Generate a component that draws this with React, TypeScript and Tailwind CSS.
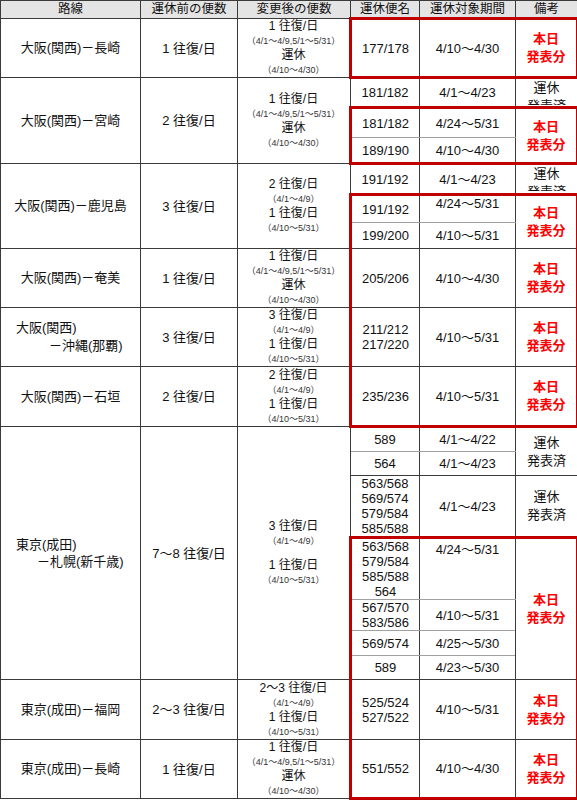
import React from "react";

// base cell styles
const td = "border border-[#3a3a3a] p-0 text-center align-middle";
const subB = "border-b-[#a0a0a0]";
const subT = "border-t-[#a0a0a0]";
const rT = "border-t-[3px] border-t-[#c00000]";
const rB = "border-b-[3px] border-b-[#c00000]";
const rL = "border-l-[3px] border-l-[#c00000]";
const rR = "border-r-[3px] border-r-[#c00000]";

const big = "text-[13px] leading-[15px]";
const head = "text-[12.5px] leading-[15px]";
const num = "text-[13px] leading-[15px]";
const route = "text-[13px]";

function Today() {
  return (
    <div className="text-[13px] leading-[18px] font-bold text-[#ff0000]">
      本日
      <br />
      発表分
    </div>
  );
}

function Done({ clip }: { clip?: boolean }) {
  return (
    <div
      className={`text-[13px] leading-[18px] ${clip ? "h-[26px] overflow-hidden" : ""}`}
    >
      運休
      <br />
      発表済
    </div>
  );
}

function Sched({ v, gap }: { v: readonly string[]; gap?: boolean }) {
  return (
    <div className="flex flex-col items-center">
      <span className="text-[12px] leading-[15px]">{v[0]}</span>
      <span className="text-[9px] leading-[14px] text-[#333]">{v[1]}</span>
      <span className={`text-[12px] leading-[15px] ${gap ? "mt-[10px]" : ""}`}>{v[2]}</span>
      <span className="text-[9px] leading-[14px] text-[#333]">{v[3]}</span>
    </div>
  );
}

const cut = ["1 往復/日", "（4/1～4/9,5/1～5/31）", "運休", "（4/10～4/30）"] as const;
const two = (x: string) => [x, "（4/1～4/9）", "1 往復/日", "（4/10～5/31）"] as const;

export default function App() {
  return (
    <div className="w-[577px] bg-white text-[#111] font-['Liberation_Sans','Noto_Sans_CJK_JP',sans-serif]">
      <table className="w-[577px] table-fixed border-collapse">
        <colgroup>
          <col className="w-[140px]" />
          <col className="w-[97px]" />
          <col className="w-[113px]" />
          <col className="w-[69px]" />
          <col className="w-[96px]" />
          <col className="w-[62px]" />
        </colgroup>
        <thead>
          <tr className="h-[18px] bg-[#e4e4e4]">
            {["路線", "運休前の便数", "変更後の便数", "運休便名", "運休対象期間", "備考"].map((h) => (
              <th key={h} className={`${td} font-normal ${head}`}>
                {h}
              </th>
            ))}
          </tr>
        </thead>
        <tbody>
          {/* 大阪－長崎 */}
          <tr className="h-[59px]">
            <td className={`${td} ${route}`}>大阪(関西)－長崎</td>
            <td className={`${td} ${big}`}>1 往復/日</td>
            <td className={td}><Sched v={cut} /></td>
            <td className={`${td} ${num} ${rT} ${rL} ${rB}`}>177/178</td>
            <td className={`${td} ${num} ${rT} ${rB}`}>4/10～4/30</td>
            <td className={`${td} ${rT} ${rR} ${rB}`}><Today /></td>
          </tr>

          {/* 大阪－宮崎 */}
          <tr className="h-[30px]">
            <td rowSpan={3} className={`${td} ${route}`}>大阪(関西)－宮崎</td>
            <td rowSpan={3} className={`${td} ${big}`}>2 往復/日</td>
            <td rowSpan={3} className={td}><Sched v={cut} /></td>
            <td className={`${td} ${num}`}>181/182</td>
            <td className={`${td} ${num}`}>4/1～4/23</td>
            <td className={`${td} !align-top`}><Done clip /></td>
          </tr>
          <tr className="h-[30px]">
            <td className={`${td} ${num} ${rT} ${rL} ${subB}`}>181/182</td>
            <td className={`${td} ${num} ${rT} ${subB}`}>4/24～5/31</td>
            <td rowSpan={2} className={`${td} ${rT} ${rR} ${rB}`}><Today /></td>
          </tr>
          <tr className="h-[26px]">
            <td className={`${td} ${num} ${rL} ${rB} ${subT}`}>189/190</td>
            <td className={`${td} ${num} ${rB} ${subT}`}>4/10～4/30</td>
          </tr>

          {/* 大阪－鹿児島 */}
          <tr className="h-[31px]">
            <td rowSpan={3} className={`${td} ${route}`}>大阪(関西)－鹿児島</td>
            <td rowSpan={3} className={`${td} ${big}`}>3 往復/日</td>
            <td rowSpan={3} className={td}><Sched v={["2 往復/日", "（4/1～4/9）", "1 往復/日", "（4/10～5/31）"]} /></td>
            <td className={`${td} ${num}`}>191/192</td>
            <td className={`${td} ${num}`}>4/1～4/23</td>
            <td className={`${td} !align-top`}><Done clip /></td>
          </tr>
          <tr className="h-[28px]">
            <td className={`${td} ${num} ${rT} ${rL} ${subB}`}>191/192</td>
            <td className={`${td} ${num} ${rT} ${subB} !align-top`}>4/24～5/31</td>
            <td rowSpan={2} className={`${td} ${rT} ${rR}`}><Today /></td>
          </tr>
          <tr className="h-[26px]">
            <td className={`${td} ${num} ${rL} ${subT}`}>199/200</td>
            <td className={`${td} ${num} ${subT}`}>4/10～5/31</td>
          </tr>

          {/* 大阪－奄美 */}
          <tr className="h-[59px]">
            <td className={`${td} ${route}`}>大阪(関西)－奄美</td>
            <td className={`${td} ${big}`}>1 往復/日</td>
            <td className={td}><Sched v={cut} /></td>
            <td className={`${td} ${num} ${rL}`}>205/206</td>
            <td className={`${td} ${num}`}>4/10～4/30</td>
            <td className={`${td} ${rR}`}><Today /></td>
          </tr>

          {/* 大阪－沖縄 */}
          <tr className="h-[59px]">
            <td className={`${td} ${route} leading-[18px] !text-left`}>
              <div className="pl-[15px]">大阪(関西)</div>
              <div className="pl-[48px]">－沖縄(那覇)</div>
            </td>
            <td className={`${td} ${big}`}>3 往復/日</td>
            <td className={td}><Sched v={two("3 往復/日")} /></td>
            <td className={`${td} ${num} ${rL}`}>
              211/212
              <br />
              217/220
            </td>
            <td className={`${td} ${num}`}>4/10～5/31</td>
            <td className={`${td} ${rR}`}><Today /></td>
          </tr>

          {/* 大阪－石垣 */}
          <tr className="h-[60px]">
            <td className={`${td} ${route}`}>大阪(関西)－石垣</td>
            <td className={`${td} ${big}`}>2 往復/日</td>
            <td className={td}><Sched v={two("2 往復/日")} /></td>
            <td className={`${td} ${num} ${rL} ${rB}`}>235/236</td>
            <td className={`${td} ${num} ${rB}`}>4/10～5/31</td>
            <td className={`${td} ${rR} ${rB}`}><Today /></td>
          </tr>

          {/* 東京－札幌 */}
          <tr className="h-[25px]">
            <td rowSpan={7} className={`${td} ${route} leading-[17px] !text-left`}>
              <div className="pl-[15px]">東京(成田)</div>
              <div className="pl-[36px]">－札幌(新千歳)</div>
            </td>
            <td rowSpan={7} className={`${td} ${big}`}>7～8 往復/日</td>
            <td rowSpan={7} className={td}><Sched v={["3 往復/日", "（4/1～4/9）", "1 往復/日", "（4/10～5/31）"]} gap /></td>
            <td className={`${td} ${num} ${subB}`}>589</td>
            <td className={`${td} ${num} ${subB}`}>4/1～4/22</td>
            <td rowSpan={2} className={td}><Done /></td>
          </tr>
          <tr className="h-[24px]">
            <td className={`${td} ${num} ${subT}`}>564</td>
            <td className={`${td} ${num} ${subT}`}>4/1～4/23</td>
          </tr>
          <tr className="h-[60px]">
            <td className={`${td} ${num}`}>
              563/568
              <br />
              569/574
              <br />
              579/584
              <br />
              585/588
            </td>
            <td className={`${td} ${num}`}>4/1～4/23</td>
            <td className={td}><Done /></td>
          </tr>
          <tr className="h-[60px]">
            <td className={`${td} ${num} ${rT} ${rL} ${subB}`}>
              563/568
              <br />
              579/584
              <br />
              585/588
              <br />
              564
            </td>
            <td className={`${td} ${num} ${rT} ${subB} !align-top pt-[3px]`}>4/24～5/31</td>
            <td rowSpan={4} className={`${td} ${rT} ${rR}`}><Today /></td>
          </tr>
          <tr className="h-[29px]">
            <td className={`${td} ${num} ${rL} ${subT} ${subB}`}>
              567/570
              <br />
              583/586
            </td>
            <td className={`${td} ${num} ${subT} ${subB}`}>4/10～5/31</td>
          </tr>
          <tr className="h-[25px]">
            <td className={`${td} ${num} ${rL} ${subT} ${subB}`}>569/574</td>
            <td className={`${td} ${num} ${subT} ${subB}`}>4/25～5/30</td>
          </tr>
          <tr className="h-[24px]">
            <td className={`${td} ${num} ${rL} ${subT}`}>589</td>
            <td className={`${td} ${num} ${subT}`}>4/23～5/30</td>
          </tr>

          {/* 東京－福岡 */}
          <tr className="h-[60px]">
            <td className={`${td} ${route}`}>東京(成田)－福岡</td>
            <td className={`${td} ${big}`}>2～3 往復/日</td>
            <td className={td}><Sched v={two("2～3 往復/日")} /></td>
            <td className={`${td} ${num} ${rL}`}>
              525/524
              <br />
              527/522
            </td>
            <td className={`${td} ${num}`}>4/10～5/31</td>
            <td className={`${td} ${rR}`}><Today /></td>
          </tr>

          {/* 東京－長崎 */}
          <tr className="h-[59px]">
            <td className={`${td} ${route}`}>東京(成田)－長崎</td>
            <td className={`${td} ${big}`}>1 往復/日</td>
            <td className={td}><Sched v={cut} /></td>
            <td className={`${td} ${num} ${rL} ${rB}`}>551/552</td>
            <td className={`${td} ${num} ${rB}`}>4/10～4/30</td>
            <td className={`${td} ${rR} ${rB}`}><Today /></td>
          </tr>
        </tbody>
      </table>
    </div>
  );
}
